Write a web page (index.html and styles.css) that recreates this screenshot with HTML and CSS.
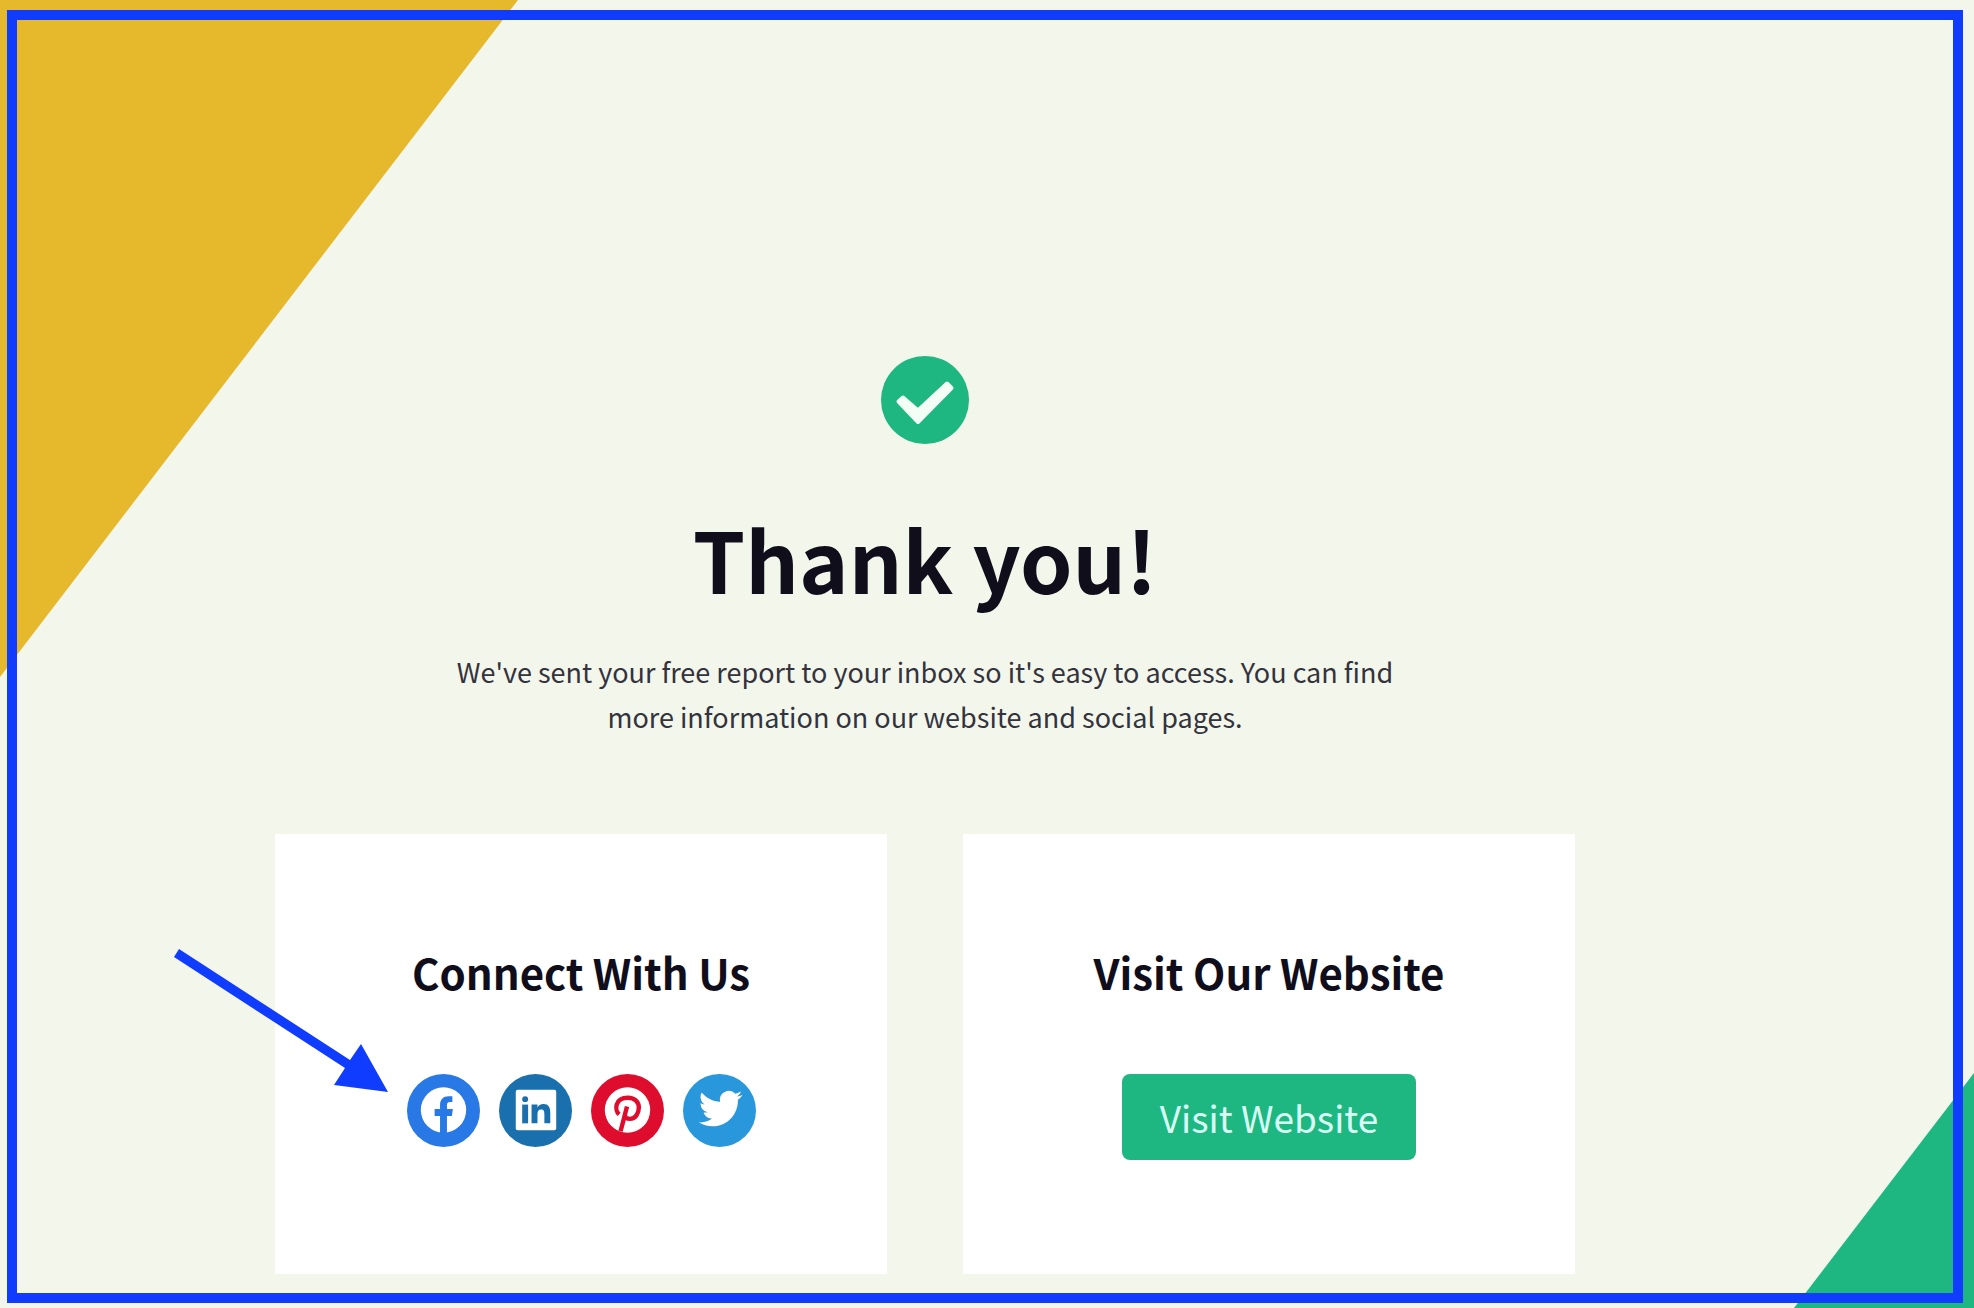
FILE: index.html
```html
<!DOCTYPE html>
<html lang="en">
<head>
    <meta charset="UTF-8">
    <meta name="viewport" content="width=device-width, initial-scale=1.0">
    <title>Thank you!</title>
    <link rel="stylesheet" href="styles.css">
</head>
<body>
    <div class="corner corner-top"></div>
    <div class="corner corner-bottom"></div>

    <main class="content">
        <svg class="check" viewBox="0 0 88 88" aria-hidden="true">
            <circle cx="44" cy="44" r="44" fill="#1eb782"/>
            <path d="M17.500 45.500L22 41.500L37 54.500L66 27.500L70.500 32L37 66Z" fill="#f3fff6" stroke="#f3fff6" stroke-width="4" stroke-linejoin="round"/>
        </svg>
        <h1>Thank you!</h1>
        <p class="message">We've sent your free report to your inbox so it's easy to access. You can find more information on our website and social pages.</p>

        <div class="cards">
            <section class="card">
                <svg class="arrow" viewBox="0 0 214 143" aria-hidden="true">
                    <path d="M5 0L176 111L187 95L214 143L160 136L171 119L0 8Z" fill="#103cff"/>
                </svg>
                <h2>Connect With Us</h2>
                <ul class="social">
                    <li><a href="#facebook" aria-label="Facebook">
                        <svg viewBox="0 0 74 74">
                            <circle cx="37" cy="37" r="37" fill="#2878e6"/>
                            <circle cx="37" cy="36.500" r="23" fill="#fff"/>
                            <path d="M33.500 60V42.500H28V35.500H33.500V31.500C33.500 25.500 37 22.500 42 22.500H46V28.500H43.500C41.500 28.500 40.500 29.500 40.500 31.500V35.500H46.500L45.500 42.500H40.500V60Z" fill="#2878e6"/>
                        </svg>
                    </a></li>
                    <li><a href="#linkedin" aria-label="LinkedIn">
                        <svg viewBox="0 0 74 74">
                            <circle cx="37" cy="37" r="37" fill="#1a70ad"/>
                            <rect x="17" y="16" width="41" height="41" rx="2" fill="#fff"/>
                            <g fill="#1a70ad">
                                <circle cx="26.500" cy="25.500" r="3"/>
                                <rect x="23.500" y="31" width="6" height="19"/>
                                <path d="M33 31h6v3c1-2 3-3.500 6-3.500 5.500 0 7 3.500 7 9V50h-6V41c0-3-.5-5-3.300-5S39 38 39 41v9h-6z"/>
                            </g>
                        </svg>
                    </a></li>
                    <li><a href="#pinterest" aria-label="Pinterest">
                        <svg viewBox="0 0 74 74">
                            <circle cx="37" cy="37" r="37" fill="#df0d2d"/>
                            <circle cx="37" cy="36.500" r="23" fill="#fff"/>
                            <path d="M28.500 41C24 37 23.500 24 37.500 24C44.500 24 48.500 28.500 48.500 34C48.500 40 45 45.500 39.500 45.500C36.500 45.500 34.500 44 34 42M36.500 33L30 58" fill="none" stroke="#df0d2d" stroke-width="4.500"/>
                        </svg>
                    </a></li>
                    <li><a href="#twitter" aria-label="Twitter">
                        <svg viewBox="0 0 74 74">
                            <circle cx="37" cy="37" r="37" fill="#2997dc"/>
                            <path transform="translate(16 13) scale(1.84)" fill="#fff" d="M23.953 4.570a10 10 0 01-2.825.775 4.958 4.958 0 002.163-2.723c-.951.555-2.005.959-3.127 1.184a4.920 4.920 0 00-8.384 4.482C7.690 8.095 4.067 6.130 1.640 3.162a4.822 4.822 0 00-.666 2.475c0 1.710.870 3.213 2.188 4.096a4.904 4.904 0 01-2.228-.616v.060a4.923 4.923 0 003.946 4.827 4.996 4.996 0 01-2.212.085 4.936 4.936 0 004.604 3.417 9.867 9.867 0 01-6.102 2.105c-.390 0-.779-.023-1.170-.067a13.995 13.995 0 007.557 2.209c9.053 0 13.998-7.496 13.998-13.985 0-.210 0-.420-.015-.630A9.935 9.935 0 0024 4.590z"/>
                        </svg>
                    </a></li>
                </ul>
            </section>

            <section class="card">
                <h2>Visit Our Website</h2>
                <a class="button" href="#website">Visit Website</a>
            </section>
        </div>
    </main>

    <div class="frame"></div>
</body>
</html>
```
FILE: styles.css
```css
* {
    margin: 0;
    padding: 0;
    box-sizing: border-box;
}

body {
    position: relative;
    min-height: 100vh;
    padding: 356px 124px 34px 0;
    background-color: #f3f6eb;
    color: #110e1c;
    font-family: "Source Sans Pro", "Noto Sans CJK SC", sans-serif;
}

/* Coloured page corners */
.corner {
    position: absolute;
}

.corner-top {
    top: 0;
    left: 0;
    width: 518px;
    height: 677px;
    background-color: #e6b82b;
    clip-path: polygon(0 0, 100% 0, 0 100%);
}

.corner-bottom {
    right: 0;
    bottom: 0;
    width: 180px;
    height: 235px;
    background-color: #1eb782;
    clip-path: polygon(100% 0, 100% 100%, 0 100%);
}

.frame {
    position: absolute;
    top: 10px;
    right: 11px;
    bottom: 5px;
    left: 7px;
    border: 10px solid #103cff;
    pointer-events: none;
}

.content {
    position: relative;
    display: flex;
    flex-direction: column;
    align-items: center;
    max-width: 1300px;
    margin: 0 auto;
    text-align: center;
}

.check {
    width: 88px;
    height: 88px;
}

h1 {
    margin-top: 54px;
    font-size: 84px;
    line-height: 120px;
}

.message {
    max-width: 960px;
    margin-top: 31px;
    color: #33333d;
    font-size: 27px;
    line-height: 45px;
}

.cards {
    display: grid;
    grid-template-columns: 1fr 1fr;
    gap: 76px;
    width: 100%;
    margin-top: 95px;
}

.card {
    position: relative;
    display: flex;
    flex-direction: column;
    align-items: center;
    padding: 108px 20px 114px;
    background-color: #fff;
}

h2 {
    font-size: 42px;
    line-height: 60px;
}

.social {
    display: flex;
    gap: 19px;
    margin-top: 72px;
    list-style: none;
}

.social a,
.social svg {
    display: block;
    width: 73px;
    height: 73px;
}

.button {
    margin-top: 72px;
    padding: 0 38px;
    border-radius: 8px;
    background-color: #1eb782;
    color: #d9fff4;
    font-size: 37px;
    line-height: 86px;
    text-decoration: none;
}

/* Pointer that lies over the first card */
.arrow {
    position: absolute;
    top: 115px;
    left: -101px;
    width: 214px;
    height: 143px;
}
```
